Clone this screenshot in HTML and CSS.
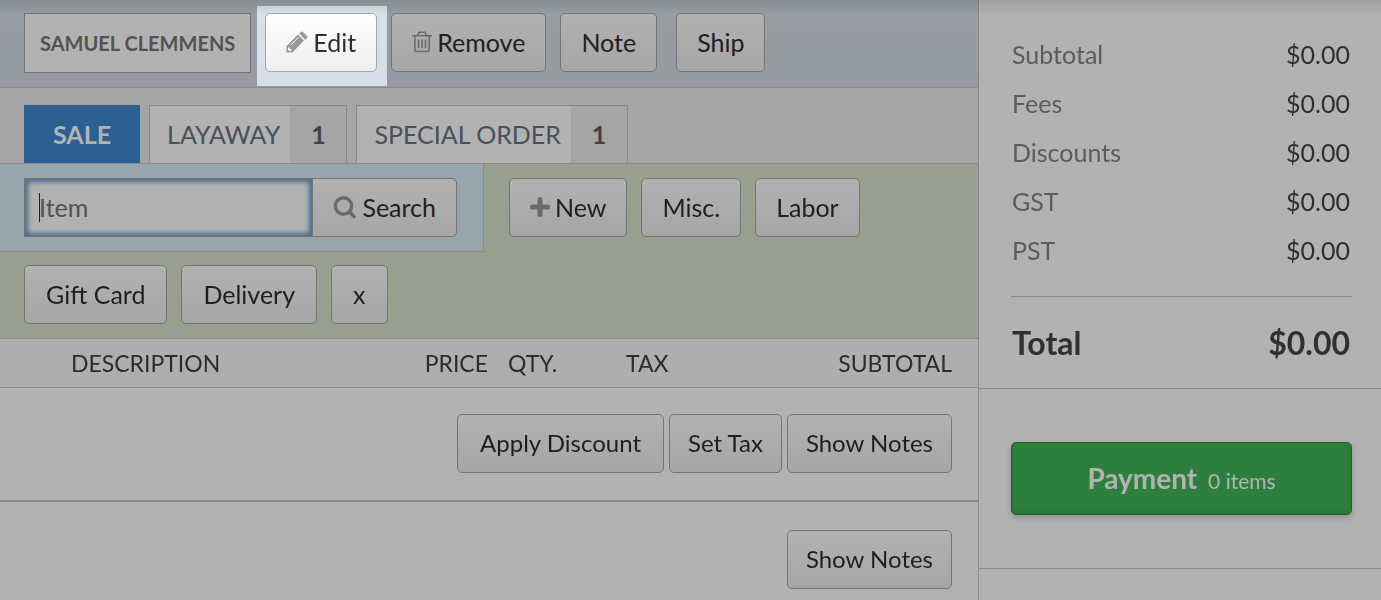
FILE: index.html
```html
<!DOCTYPE html>
<html lang="en">
  <head>
    <meta charset="UTF-8" />
    <meta name="viewport" content="width=device-width, initial-scale=1.0"/>
    <title>Sale</title>
    <link rel="stylesheet" href="styles.css">
  </head>
  <body>
    <div class="page">
      <main class="register">
        <!-- Customer -->
        <div class="customer-bar">
          <a href="#" class="customer-name">SAMUEL CLEMMENS</a>
          <div class="spotlight">
            <button type="button" class="btn">
              <svg class="icon" width="22" height="22" viewBox="0 0 22 22">
                <path fill="#999" d="M.5 21.500V15L12 3.500l6 6L6.500 21.500zM13.200 2.400l1.500-1.500q1.200-.8 2.300 0l4 4q.8 1.100 0 2.200l-1.700 1.600z"/>
                <path fill="none" stroke="#fafafa" stroke-width="1" d="M4.500 14.300 12.300 6.500"/>
                <path fill="#fafafa" d="M2 16.800l1.300-.8.500 2 2 .5-.9 1.400-1.700.1-1.200-1.200z"/>
              </svg>
              Edit
            </button>
          </div>
          <button type="button" class="btn">
            <svg class="icon" width="20" height="22" viewBox="0 0 20 22">
              <g fill="none" stroke="#999" stroke-width="1.600">
                <path d="M0 4.800h20M5.500 4.500 7 1.200h6l1.500 3.300M2.800 5v13.500q0 2 2 2h10.400q2 0 2-2V5"/>
                <path d="M6.500 8.500v8.500M10 8.500v8.500M13.500 8.500v8.500"/>
              </g>
            </svg>
            Remove
          </button>
          <button type="button" class="btn">Note</button>
          <button type="button" class="btn btn-ship">Ship</button>
        </div>

        <!-- Sale type -->
        <nav class="tabs">
          <a href="#" class="tab active">SALE</a>
          <a href="#" class="tab"><span class="tab-label">LAYAWAY</span><span class="count">1</span></a>
          <a href="#" class="tab"><span class="tab-label">SPECIAL ORDER</span><span class="count">1</span></a>
        </nav>

        <!-- Add items -->
        <div class="add-items">
          <div class="add-row">
            <form class="item-search">
              <input type="text" class="item-input" placeholder="Item" aria-label="Item" autofocus />
              <button type="button" class="btn btn-search">
                <svg class="icon" width="24" height="24" viewBox="0 0 24 24">
                  <circle cx="10.500" cy="11" r="8.200" fill="none" stroke="#999" stroke-width="3.400"/>
                  <path d="M16.500 17l4.500 4.500" stroke="#999" stroke-width="3.600" stroke-linecap="round"/>
                </svg>
                Search
              </button>
            </form>
            <div class="add-buttons">
              <button type="button" class="btn">
                <svg class="icon" width="20" height="20" viewBox="0 0 20 20">
                  <path d="M10 2.500v15M2.500 10h15" stroke="#999" stroke-width="5" stroke-linecap="round"/>
                </svg>
                New
              </button>
              <button type="button" class="btn">Misc.</button>
              <button type="button" class="btn">Labor</button>
            </div>
          </div>
          <div class="add-more">
            <button type="button" class="btn">Gift Card</button>
            <button type="button" class="btn">Delivery</button>
            <button type="button" class="btn">x</button>
          </div>
        </div>

        <table class="lines">
          <thead>
            <tr>
              <th class="description">DESCRIPTION</th>
              <th class="price">PRICE</th>
              <th class="qty">QTY.</th>
              <th class="tax">TAX</th>
              <th class="subtotal">SUBTOTAL</th>
            </tr>
          </thead>
        </table>

        <div class="actions">
          <button type="button" class="btn btn-wide">Apply Discount</button>
          <button type="button" class="btn">Set Tax</button>
          <button type="button" class="btn">Show Notes</button>
        </div>
        <div class="actions">
          <button type="button" class="btn">Show Notes</button>
        </div>
      </main>

      <aside class="summary">
        <div class="totals">
          <dl class="amounts">
            <div class="amount"><dt>Subtotal</dt><dd>$0.00</dd></div>
            <div class="amount"><dt>Fees</dt><dd>$0.00</dd></div>
            <div class="amount"><dt>Discounts</dt><dd>$0.00</dd></div>
            <div class="amount"><dt>GST</dt><dd>$0.00</dd></div>
            <div class="amount"><dt>PST</dt><dd>$0.00</dd></div>
          </dl>
          <div class="total"><span>Total</span><span>$0.00</span></div>
        </div>
        <div class="payment">
          <button type="button" class="btn-payment">Payment <small>0 items</small></button>
        </div>
      </aside>
    </div>
  </body>
</html>
```
FILE: styles.css
```css
* {
  box-sizing: border-box;
}
body {
  margin: 0;
  font-family: Lato, sans-serif;
  font-size: 25px;
  color: #2f2f2f;
  background: #fff;
}
a {
  text-decoration: none;
}

.page {
  display: flex;
  position: relative;
  min-height: 100vh;
  overflow: hidden;
}
/* shadow cast by the bar above */
.page::before {
  content: "";
  position: absolute;
  top: 0;
  left: 0;
  right: 0;
  height: 16px;
  background: linear-gradient(rgba(0, 0, 0, 0.1), rgba(0, 0, 0, 0));
  pointer-events: none;
}
.register {
  flex: 1;
  min-width: 0;
}

/* Buttons */
.btn {
  display: inline-flex;
  align-items: center;
  justify-content: center;
  gap: 5px;
  height: 59px;
  padding: 0 20px 2px;
  border: 1px solid #a7a7a7;
  border-radius: 5px;
  background: linear-gradient(#fff, #eee);
  font-family: inherit;
  font-size: 25px;
  color: #2f2f2f;
  white-space: nowrap;
  cursor: pointer;
}
.btn:hover {
  background: #eee;
}
.icon {
  flex-shrink: 0;
}

/* Customer */
.customer-bar {
  display: flex;
  align-items: flex-start;
  gap: 14px;
  height: 88px;
  padding: 13px 24px 0;
  border-bottom: 1px solid #c6c6c6;
  background: linear-gradient(#d8e2e9, #d6dde9);
}
.customer-name {
  height: 60px;
  padding: 0 15px;
  border: 1px solid #a7a7a7;
  background: #fff;
  font-size: 20px;
  font-weight: bold;
  line-height: 58px;
  color: #777;
}
.btn-ship {
  margin-left: 5px;
}

/* Dims the page around the highlighted button */
.spotlight {
  position: relative;
  z-index: 10;
}
.spotlight::after {
  content: "";
  position: absolute;
  top: -7px;
  right: -10px;
  bottom: -14px;
  left: -8px;
  box-shadow: 0 0 0 9999px rgba(0, 0, 0, 0.3);
  pointer-events: none;
}

/* Tabs */
.tabs {
  display: flex;
  gap: 9px;
  padding: 17px 24px 0;
  border-bottom: 1px solid #c6c6c6;
  background: #ededed;
}
.tab {
  display: flex;
  height: 58px;
  border: 1px solid #c6c6c6;
  border-bottom: none;
  background: #fff;
  line-height: 57px;
  color: #677583;
}
.tab.active {
  padding: 0 28px;
  border-color: #3f88d1;
  background: #3f88d1;
  font-weight: bold;
  color: #fff;
}
.tab-label {
  padding: 0 10px 0 17px;
}
.count {
  width: 56px;
  background: #ededed;
  font-weight: bold;
  text-align: center;
  color: #5f5f5f;
}

/* Add items */
.add-items {
  border-bottom: 1px solid #c6c6c6;
  background: #dbe5ce;
}
.add-row {
  display: flex;
}
.item-search {
  display: flex;
  width: 484px;
  padding: 14px 26px 14px 24px;
  border-right: 1px solid #c6c6c6;
  border-bottom: 1px solid #c6c6c6;
  background: #d9ecfa;
}
.item-input {
  flex: 1;
  min-width: 0;
  height: 59px;
  padding: 0 14px 2px;
  border: 1px solid #a7a7a7;
  font-family: inherit;
  font-size: 25px;
  color: #2f2f2f;
}
.item-input:focus {
  outline: none;
  box-shadow: inset 0 0 5px 3px #639dcc;
}
/* taller caret while the box is empty */
.item-input:placeholder-shown:focus {
  caret-color: transparent;
  background: linear-gradient(#2f2f2f, #2f2f2f) 14px 50% / 1px 29px no-repeat #fff;
}
.item-input::placeholder {
  color: #777;
}
.btn-search {
  margin-left: -1px;
  border-radius: 0 5px 5px 0;
}
.add-buttons {
  display: flex;
  gap: 14px;
  padding: 14px 25px;
}
.add-more {
  display: flex;
  gap: 14px;
  padding: 13px 24px 14px;
}
.add-more .btn {
  padding: 0 21px 2px;
}

/* Sale lines */
.lines {
  width: 100%;
  border-spacing: 0;
  table-layout: fixed;
}
.lines th {
  height: 49px;
  padding: 0;
  border-bottom: 1px solid #c6c6c6;
  background: #f9f9f9;
  font-size: 23px;
  font-weight: normal;
  text-align: left;
  color: #404040;
}
.lines .description {
  padding-left: 71px;
}
.lines .price {
  width: 100px;
  text-align: right;
}
.lines .qty {
  width: 138px;
  padding-left: 20px;
}
.lines .tax {
  width: 120px;
}
.lines .subtotal {
  width: 232px;
  padding-right: 26px;
  text-align: right;
}
.actions {
  display: flex;
  justify-content: flex-end;
  gap: 5px;
  padding: 26px 26px 27px;
}
.actions + .actions {
  padding: 28px 26px 0;
  border-top: 2px solid #c6caca;
}
.actions .btn {
  padding: 0 18px 2px;
  font-size: 24px;
}
.actions .btn-wide {
  padding: 0 22px 2px;
}

/* Summary */
.summary {
  width: 403px;
  border-left: 1px solid #c0c8c8;
}
.totals {
  padding: 30px 29px 0 32px;
  border-bottom: 1px solid #c0c8c8;
}
.amounts {
  margin: 0;
  padding-bottom: 21px;
  border-bottom: 1px solid #c0c8c8;
}
.amount {
  display: flex;
  justify-content: space-between;
  padding: 0 2px 0 1px;
  line-height: 49px;
}
.amount dt {
  color: #808684;
}
.amount dd {
  margin: 0;
  color: #444;
}
.total {
  display: flex;
  justify-content: space-between;
  padding: 0 2px 0 1px;
  font-size: 32px;
  font-weight: bold;
  line-height: 91px;
  color: #444746;
}
.payment {
  padding: 53px 29px 53px 32px;
  border-bottom: 1px solid #c0c8c8;
}
.btn-payment {
  width: 100%;
  height: 73px;
  padding: 0 0 2px;
  border: 1px solid #2c883f;
  border-radius: 5px;
  background: #40b756;
  box-shadow: inset 0 -2px 4px rgba(0, 0, 0, 0.12), 0 3px 6px rgba(0, 0, 0, 0.2);
  font-family: inherit;
  font-size: 28px;
  font-weight: bold;
  color: #fff;
  cursor: pointer;
}
.btn-payment small {
  margin-left: 4px;
  font-size: 21px;
  font-weight: normal;
}
```
